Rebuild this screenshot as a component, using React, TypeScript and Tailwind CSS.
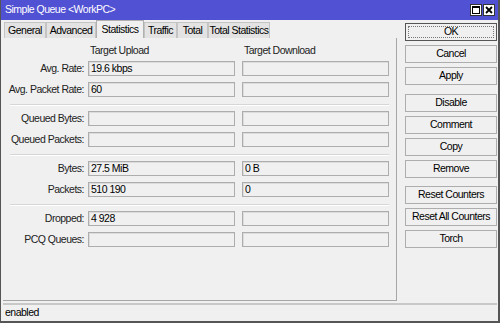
import React from "react";

const font = { fontFamily: '"Liberation Sans", Arial, sans-serif' };

type Row = { label: string; up: string; down: string };

const groups: Row[][] = [
  [
    { label: "Avg. Rate:", up: "19.6 kbps", down: "" },
    { label: "Avg. Packet Rate:", up: "60", down: "" },
  ],
  [
    { label: "Queued Bytes:", up: "", down: "" },
    { label: "Queued Packets:", up: "", down: "" },
  ],
  [
    { label: "Bytes:", up: "27.5 MiB", down: "0 B" },
    { label: "Packets:", up: "510 190", down: "0" },
  ],
  [
    { label: "Dropped:", up: "4 928", down: "" },
    { label: "PCQ Queues:", up: "", down: "" },
  ],
];

const tabs = [
  { name: "General", w: "w-[42px]" },
  { name: "Advanced", w: "w-[50px]" },
  { name: "Statistics", w: "w-[48px]", active: true },
  { name: "Traffic", w: "w-[33px]" },
  { name: "Total", w: "w-[31px]" },
  { name: "Total Statistics", w: "w-[62px]" },
];

const buttonGroups = [
  ["OK", "Cancel", "Apply"],
  ["Disable", "Comment", "Copy", "Remove"],
  ["Reset Counters", "Reset All Counters", "Torch"],
];

const txt = "text-[10.5px] tracking-[-0.5px] whitespace-nowrap";

const Field: React.FC<{ value: string }> = ({ value }) => (
  <div className={`w-[147px] h-[15px] border border-[#adadad] shadow-[inset_1px_1px_0_#dcdcdc] bg-[#f0f0f0] pl-[2px] leading-[13px] text-black ${txt}`}>
    {value}
  </div>
);

const DataRow: React.FC<{ row: Row }> = ({ row }) => (
  <div className="flex items-center h-[15px]">
    <div className={`w-[85px] pr-[4px] text-right text-[#222] ${txt}`}>{row.label}</div>
    <Field value={row.up} />
    <div className="w-[7px]" />
    <Field value={row.down} />
  </div>
);

const Separator: React.FC = () => (
  <div className="ml-[7px] w-[379px] mt-[7px] mb-[5px] border-t border-[#d6d6d6] border-b border-b-white" />
);

export default function App() {
  return (
    <div
      style={font}
      className="w-[500px] h-[323px] bg-[#f0f0f0] border-l border-r-2 border-b-2 border-[#555555] flex flex-col overflow-hidden"
    >
      {/* title bar */}
      <div className="h-[20px] bg-[#5151d3] flex items-center pl-[4px] pr-[3px]">
        <span className={`text-white flex-1 ${txt}`}>Simple Queue &lt;WorkPC&gt;</span>
        <div className="flex gap-[1px]">
          <div className="w-[12px] h-[12px] bg-white border border-[#333] flex items-center justify-center">
            <svg width="8" height="8" viewBox="0 0 8 8">
              <rect x="0.5" y="0.5" width="7" height="7" fill="none" stroke="#000" />
              <line x1="0" y1="1.5" x2="8" y2="1.5" stroke="#000" />
            </svg>
          </div>
          <div className="w-[12px] h-[12px] bg-white border border-[#333] flex items-center justify-center">
            <svg width="8" height="8" viewBox="0 0 8 8">
              <path d="M1 1 L7 7 M7 1 L1 7" stroke="#000" strokeWidth="1.8" />
            </svg>
          </div>
        </div>
      </div>

      <div className="flex flex-1">
        {/* left: tabs + panel */}
        <div className="ml-[2px] w-[394px] flex flex-col">
          <div className="h-[18px] flex items-end pl-[1px]">
            {tabs.map((t) =>
              t.active ? (
                <div
                  key={t.name}
                  className={`${t.w} h-[18px] bg-[#f0f0f0] border-l border-t border-r border-[#b0b0b0] text-center leading-[16px] text-black ${txt}`}
                >
                  {t.name}
                </div>
              ) : (
                <div
                  key={t.name}
                  className={`${t.w} h-[16px] bg-[#e3e3e3] border-l border-t border-r border-[#c4c4c4] text-center leading-[15px] text-black ${txt}`}
                >
                  {t.name}
                </div>
              )
            )}
          </div>
          <div className="h-[263px] border-r border-b border-[#a6a6a6] pt-[6px]">
            <div className={`flex h-[14px] items-center text-[#222] ${txt}`}>
              <div className="w-[87px]" />
              <div className="w-[154px]">Target Upload</div>
              <div>Target Download</div>
            </div>
            <div className="mt-[3px]">
              {groups.map((g, gi) => (
                <div key={gi}>
                  {gi > 0 && <Separator />}
                  <div className="flex flex-col gap-[6px]">
                    {g.map((r) => (
                      <DataRow key={r.label} row={r} />
                    ))}
                  </div>
                </div>
              ))}
            </div>
          </div>
        </div>

        {/* right: buttons */}
        <div className="ml-[8px] w-[92px] pt-[3px] flex flex-col">
          {buttonGroups.map((g, gi) => (
            <div key={gi} className={`flex flex-col gap-[4px] ${gi === 1 ? "mt-[9px]" : gi === 2 ? "mt-[8px]" : ""}`}>
              {g.map((b) => (
                <div
                  key={b}
                  className={`h-[18px] border ${b === "OK" ? "border-[#555]" : "border-[#adadad]"} bg-[#f0f0f0] text-black flex items-center justify-center ${txt}`}
                >
                  {b === "OK" ? (
                    <div className="w-[86px] h-[12px] border border-dotted border-[#777] flex items-center justify-center">
                      OK
                    </div>
                  ) : (
                    b
                  )}
                </div>
              ))}
            </div>
          ))}
        </div>
      </div>

      {/* status bar */}
      <div className={`h-[18px] ml-[2px] mr-[1px] border-t-2 border-t-[#c8c8c8] flex items-center pl-[2px] text-black ${txt}`}>
        enabled
      </div>
    </div>
  );
}
